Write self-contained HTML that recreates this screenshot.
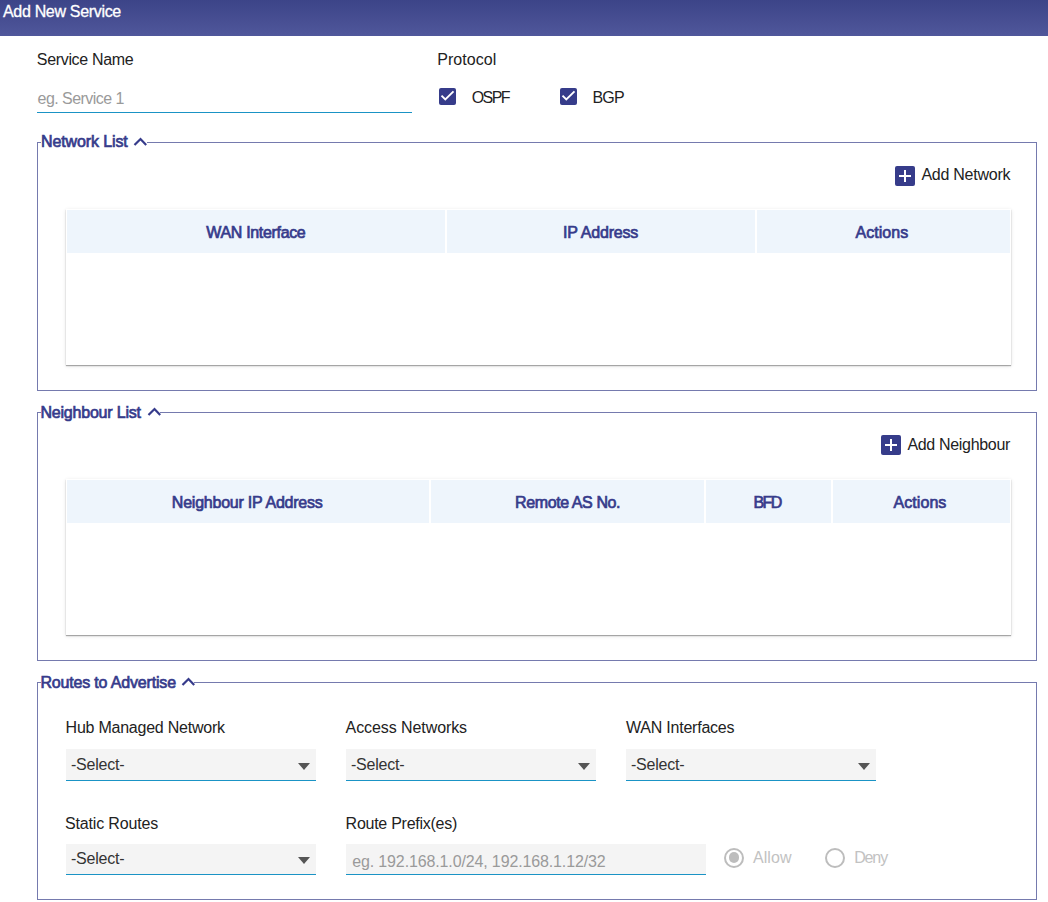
<!DOCTYPE html>
<html><head><meta charset="utf-8">
<style>
*{margin:0;padding:0;box-sizing:border-box;}
html,body{width:1048px;height:902px;overflow:hidden;background:#fff;}
body{position:relative;font-family:"Liberation Sans",sans-serif;font-size:16px;color:#212121;}
.a{position:absolute;white-space:nowrap;line-height:20px;}
.hdr{position:absolute;left:0;top:0;width:1048px;height:36px;background:linear-gradient(#3c4488,#50579b);}
.hdr .a{color:#fff;-webkit-text-stroke:0.3px #fff;}
.lbl{color:#222;}
.ph{color:#9a9a9a;}
.chk{position:absolute;width:17px;height:17px;border-radius:2px;background:#363c8a;}
.fs{position:absolute;left:37px;width:1000px;border:1px solid #757aae;border-top:none;}
.fst{position:absolute;height:1px;background:#757aae;}
.lg{color:#363b8b;-webkit-text-stroke:0.7px #363b8b;}
.card{position:absolute;left:66px;width:945px;background:#fff;box-shadow:0 1px 1px rgba(0,0,0,.3),0 1px 4px rgba(0,0,0,.12);}
.th{position:absolute;top:1px;height:43px;background:#eef5fc;}
.tht{color:#363b8b;-webkit-text-stroke:0.7px #363b8b;text-align:center;}
.addbtn{position:absolute;width:20px;height:20px;border-radius:2px;background:#363c8a;}
.sel{position:absolute;width:250px;height:32px;background:#f4f4f4;border-bottom:1px solid #1a93c5;}
.arr{position:absolute;width:0;height:0;border-left:6px solid transparent;border-right:6px solid transparent;border-top:7px solid #555;}
.radio{position:absolute;width:20px;height:20px;border-radius:50%;border:2px solid #bdbdbd;}
</style></head><body>
<div class="hdr"><div id="hdr" class="a" style="left:3.00px;top:1.50px;letter-spacing:-0.322px;">Add New Service</div></div>

<div id="svcname" class="a lbl" style="left:36.80px;top:50.30px;letter-spacing:-0.329px;">Service Name</div>
<div id="ph1" class="a ph" style="left:37.60px;top:88.70px;letter-spacing:-0.550px;">eg. Service 1</div>
<div style="position:absolute;left:37px;top:112px;width:375px;height:1px;background:#1a93c5;"></div>

<div id="protocol" class="a lbl" style="left:437.20px;top:49.70px;letter-spacing:0.049px;">Protocol</div>
<div class="chk" style="left:439px;top:88px;"><svg width="17" height="17" style="position:absolute;left:0;top:0"><polyline points="2.5,7.6 6.3,11.5 14.5,3.4" fill="none" stroke="#fff" stroke-width="1.9"/></svg></div>
<div id="ospf" class="a lbl" style="left:471.80px;top:88.20px;letter-spacing:-1.633px;">OSPF</div>
<div class="chk" style="left:560px;top:88px;"><svg width="17" height="17" style="position:absolute;left:0;top:0"><polyline points="2.5,7.6 6.3,11.5 14.5,3.4" fill="none" stroke="#fff" stroke-width="1.9"/></svg></div>
<div id="bgp" class="a lbl" style="left:592.40px;top:88.20px;letter-spacing:-0.800px;">BGP</div>

<!-- Network List -->
<div class="fs" style="top:142px;height:249px;"></div>
<div class="fst" style="top:142px;left:37px;width:4px;"></div>
<div class="fst" style="top:142px;left:147px;width:890px;"></div>
<div id="netlist" class="a lg" style="left:41.00px;top:132.20px;letter-spacing:-0.113px;">Network List</div>
<svg class="a" style="left:128px;top:130px;" width="24" height="24"><polyline points="6.5,15 12.5,9 18.2,15" fill="none" stroke="#363b8b" stroke-width="2.2"/></svg>
<div class="addbtn" style="left:895px;top:166px;"><div style="position:absolute;left:4px;top:9px;width:12px;height:2px;background:#fff"></div><div style="position:absolute;left:9px;top:4px;width:2px;height:12px;background:#fff"></div></div>
<div id="addnet" class="a lbl" style="left:921.40px;top:165.00px;letter-spacing:-0.250px;">Add Network</div>
<div class="card" style="top:209px;height:156px;">
  <div class="th" style="left:1px;width:378px;"></div>
  <div class="th" style="left:381px;width:308px;"></div>
  <div class="th" style="left:691px;width:253px;"></div>
</div>
<div id="wanif" class="a tht" style="left:65.90px;width:380px;top:222.50px;letter-spacing:-0.333px;">WAN Interface</div>
<div id="ipaddr" class="a tht" style="left:445.60px;width:310px;top:222.50px;letter-spacing:-0.206px;">IP Address</div>
<div id="actions" class="a tht" style="left:754.40px;width:255px;top:222.50px;letter-spacing:0.016px;">Actions</div>

<!-- Neighbour List -->
<div class="fs" style="top:412px;height:249px;"></div>
<div class="fst" style="top:412px;left:37px;width:4px;"></div>
<div class="fst" style="top:412px;left:160px;width:877px;"></div>
<div id="neighlist" class="a lg" style="left:40.40px;top:402.80px;letter-spacing:-0.196px;">Neighbour List</div>
<svg class="a" style="left:142px;top:400px;" width="24" height="24"><polyline points="6.5,15 12.5,9 18.2,15" fill="none" stroke="#363b8b" stroke-width="2.2"/></svg>
<div class="addbtn" style="left:881px;top:435px;"><div style="position:absolute;left:4px;top:9px;width:12px;height:2px;background:#fff"></div><div style="position:absolute;left:9px;top:4px;width:2px;height:12px;background:#fff"></div></div>
<div id="addneigh" class="a lbl" style="left:907.40px;top:435.00px;letter-spacing:-0.317px;">Add Neighbour</div>
<div class="card" style="top:479px;height:156px;">
  <div class="th" style="left:1px;width:362px;"></div>
  <div class="th" style="left:365px;width:273px;"></div>
  <div class="th" style="left:640px;width:125px;"></div>
  <div class="th" style="left:767px;width:177px;"></div>
</div>
<div id="neighip" class="a tht" style="left:65.20px;width:364px;top:492.70px;letter-spacing:-0.231px;">Neighbour IP Address</div>
<div id="remote" class="a tht" style="left:430.10px;width:275px;top:492.70px;letter-spacing:-0.400px;">Remote AS No.</div>
<div id="bfd" class="a tht" style="left:703.60px;width:127px;top:492.70px;letter-spacing:-1.650px;">BFD</div>
<div id="actions2" class="a tht" style="left:830.50px;width:179px;top:492.70px;letter-spacing:0.050px;">Actions</div>

<!-- Routes -->
<div class="fs" style="top:682px;height:218px;"></div>
<div class="fst" style="top:682px;left:37px;width:4px;"></div>
<div class="fst" style="top:682px;left:194px;width:843px;"></div>
<div id="routes" class="a lg" style="left:40.40px;top:673.00px;letter-spacing:-0.172px;">Routes to Advertise</div>
<svg class="a" style="left:176px;top:670px;" width="24" height="24"><polyline points="6.5,15 12.5,9 18.2,15" fill="none" stroke="#363b8b" stroke-width="2.2"/></svg>

<div id="hub" class="a lbl" style="left:65.60px;top:717.50px;letter-spacing:-0.235px;">Hub Managed Network</div>
<div class="sel" style="left:66px;top:749px;"><div class="arr" style="left:232px;top:14px;"></div></div>
<div id="sel1a" class="a lbl" style="left:71.00px;top:755.30px;color:#333;letter-spacing:-0.220px;">-Select-</div>

<div id="access" class="a lbl" style="left:345.60px;top:717.50px;letter-spacing:-0.084px;">Access Networks</div>
<div class="sel" style="left:346px;top:749px;"><div class="arr" style="left:232px;top:14px;"></div></div>
<div id="sel1b" class="a lbl" style="left:351.00px;top:755.30px;color:#333;letter-spacing:-0.220px;">-Select-</div>

<div id="wanifs" class="a lbl" style="left:626.00px;top:717.50px;letter-spacing:-0.224px;">WAN Interfaces</div>
<div class="sel" style="left:626px;top:749px;"><div class="arr" style="left:232px;top:14px;"></div></div>
<div id="sel1c" class="a lbl" style="left:631.00px;top:755.30px;color:#333;letter-spacing:-0.220px;">-Select-</div>

<div id="static" class="a lbl" style="left:65.00px;top:813.70px;letter-spacing:-0.167px;">Static Routes</div>
<div class="sel" style="left:66px;top:844px;height:31px;"><div class="arr" style="left:232px;top:13px;"></div></div>
<div id="sel2" class="a lbl" style="left:71.00px;top:848.80px;color:#333;letter-spacing:-0.220px;">-Select-</div>

<div id="routepfx" class="a lbl" style="left:345.60px;top:813.70px;letter-spacing:-0.260px;">Route Prefix(es)</div>
<div class="sel" style="left:346px;top:844px;width:360px;height:31px;"></div>
<div id="ipph" class="a ph" style="left:352.20px;top:851.60px;letter-spacing:-0.133px;">eg. 192.168.1.0/24, 192.168.1.12/32</div>

<div class="radio" style="left:724px;top:847.5px;"><div style="position:absolute;left:2.75px;top:2.75px;width:10.5px;height:10.5px;border-radius:50%;background:#bdbdbd;"></div></div>
<div id="allow" class="a" style="left:753.00px;top:848.30px;color:#c2c2c2;letter-spacing:0.050px;">Allow</div>
<div class="radio" style="left:825px;top:847.5px;"></div>
<div id="deny" class="a" style="left:854.20px;top:848.30px;color:#c2c2c2;letter-spacing:-1.133px;">Deny</div>
</body></html>
